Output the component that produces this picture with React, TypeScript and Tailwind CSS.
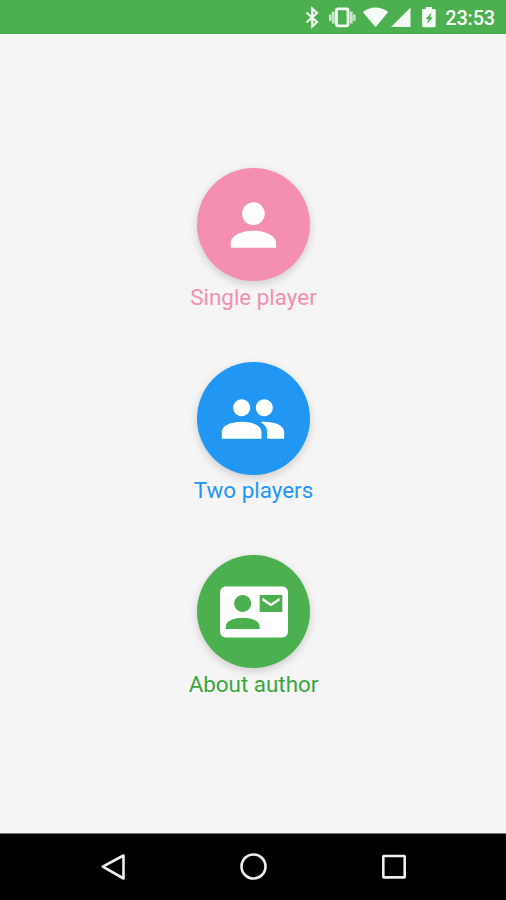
import React from 'react';

interface MenuButtonProps {
  label: string;
  circleClass: string;
  labelClass: string;
  children: React.ReactNode;
}

function MenuButton({ label, circleClass, labelClass, children }: MenuButtonProps) {
  return (
    <button className="flex h-[193.5px] flex-col items-center">
      <span
        className={`flex h-[113px] w-[113px] items-center justify-center rounded-full pt-px shadow-[0_3px_8px_rgba(0,0,0,0.17)] ${circleClass}`}
      >
        <svg viewBox="0 0 24 24" className="h-[68px] w-[68px] fill-white">
          {children}
        </svg>
      </span>
      <span className={`mt-[2.5px] text-[22.4px] leading-[27px] whitespace-nowrap ${labelClass}`}>{label}</span>
    </button>
  );
}

function StatusBar() {
  return (
    <header className="flex h-[34px] items-center justify-end bg-[#4caf50] pr-[11px] text-[#f4fbf4]">
      <svg viewBox="0 0 132 34" className="mr-[8px] h-[34px] w-[132px] fill-[#f4fbf4]">
        {/* bluetooth */}
        <path d="M1.500 12.500l10.500 9.500-4.700 4.500V8.500L12 13 1.500 22.500" fill="none" stroke="#f4fbf4" strokeWidth="2.200" />
        {/* vibrate */}
        <rect x="31.500" y="8.800" width="11.500" height="17" rx="1.200" fill="none" stroke="#f4fbf4" strokeWidth="2.800" />
        <path
          d="M26.800 11.500h2.900v12h-2.900zM24 14.500h2.300v6.500h-2.300zM44.800 11.500h2.900v12h-2.900zM48.200 14.500h2.300v6.500h-2.300z"
          opacity=".75"
        />
        {/* wifi */}
        <path d="M57.800 12C65 6 76 6 83.200 12L70.500 27.300z" />
        {/* cell signal */}
        <path d="M105.500 7.500v19.500H86z" />
        {/* charging battery */}
        <path
          fillRule="evenodd"
          d="M120.800 7h6v2h2.700c.8 0 1.200.5 1.200 1.200v15.800c0 .7-.5 1.200-1.200 1.200h-11.200c-.7 0-1.200-.5-1.200-1.200V10.200c0-.7.5-1.200 1.200-1.200h2.500zM126.500 12.500l-5.800 6.500h2.800l-1.500 4.700 5.800-6.500h-2.800z"
        />
      </svg>
      <span className="pt-[2px] text-[20px] leading-none font-medium tracking-[-0.2px]">23:53</span>
    </header>
  );
}

function NavigationBar() {
  return (
    <nav className="flex h-[67px] items-center justify-between border-t border-[#777] bg-black px-[98px]">
      <svg viewBox="0 0 30 30" className="h-[30px] w-[30px] fill-none stroke-[#eee] stroke-[2.6]">
        <path d="M25.500 3.500v23L4.800 14.700z" strokeLinejoin="round" />
      </svg>
      <svg viewBox="0 0 30 30" className="h-[30px] w-[30px] fill-none stroke-[#eee] stroke-[2.6]">
        <circle cx="15.500" cy="14.500" r="12" />
      </svg>
      <svg viewBox="0 0 30 30" className="h-[30px] w-[30px] fill-none stroke-[#eee] stroke-[2.6]">
        <rect x="5.300" y="4" width="21.400" height="21.400" rx="0.500" />
      </svg>
    </nav>
  );
}

export default function App() {
  return (
    <div className="flex h-[900px] w-[506px] flex-col overflow-hidden bg-[#f5f5f5] font-['Roboto',sans-serif]">
      <StatusBar />
      <main className="flex flex-1 flex-col items-center pt-[134.3px] pl-px">
        <MenuButton label="Single player" circleClass="bg-[#f48fb1]" labelClass="text-[#f48fb1]">
          <path d="M11.800 12c2.210 0 4-1.790 4-4s-1.790-4-4-4-4 1.790-4 4 1.790 4 4 4zm0 2c-4 0-8 1.700-8 4.300V20h16v-1.700c0-2.600-4-4.300-8-4.300z" />
        </MenuButton>
        <MenuButton label="Two players" circleClass="bg-[#2196f3]" labelClass="text-[#2196f3]">
          <path d="M16 11c1.660 0 2.990-1.340 2.990-3S17.660 5 16 5c-1.660 0-3 1.340-3 3s1.340 3 3 3zm-8 0c1.660 0 2.990-1.340 2.990-3S9.660 5 8 5C6.340 5 5 6.340 5 8s1.340 3 3 3zm0 2c-3.600 0-7 1.200-7 3.600V19h14v-2.400c0-2.400-3.400-3.600-7-3.600zm8 0c-.5 0-.9 0-1.300.05 1.300.84 2.300 1.970 2.300 3.450V19h6v-2.400c0-2.400-3.400-3.600-7-3.600z" />
        </MenuButton>
        <MenuButton label="About author" circleClass="bg-[#4caf50]" labelClass="text-[#3aa63f]">
          <path d="M21 8V7l-3 2-3-2v1l3 2 3-2zm1-5H2C.9 3 0 3.900 0 5v14c0 1.100.9 2 2 2h20c1.100 0 1.990-.9 1.990-2L24 5c0-1.100-.9-2-2-2zM8 6c1.660 0 3 1.340 3 3s-1.340 3-3 3-3-1.340-3-3 1.340-3 3-3zm6 12H2v-.8c0-2.200 3.200-3.200 6-3.200s6 1 6 3.200v.8zm8-6h-8V6h8v6z" />
        </MenuButton>
      </main>
      <NavigationBar />
    </div>
  );
}
